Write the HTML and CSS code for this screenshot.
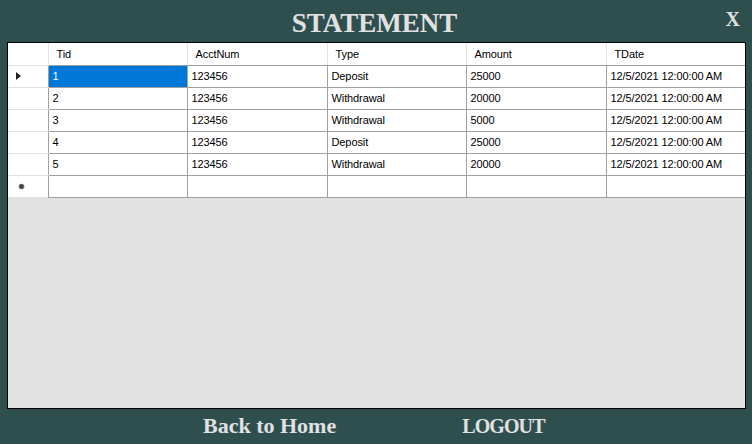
FILE: index.html
```html
<!DOCTYPE html>
<html>
<head>
<meta charset="utf-8">
<link rel="stylesheet" href="styles.css">
</head>
<body>
<div class="window">
  <header class="top">
    <div class="spacer"></div>
    <h1 class="title">STATEMENT</h1>
    <div class="close-wrap"><span class="close">X</span></div>
  </header>
  <div class="grid">
    <table class="dgv">
      <colgroup>
        <col class="c-rh"><col class="c1"><col class="c2"><col class="c3"><col class="c4"><col class="c5">
      </colgroup>
      <thead>
        <tr class="hdr">
          <th class="rh"></th><th>Tid</th><th>AcctNum</th><th>Type</th><th>Amount</th><th>TDate</th>
        </tr>
      </thead>
      <tbody>
        <tr>
          <td class="rh"><svg class="arrow" width="5" height="8" viewBox="0 0 5 8"><path d="M0 0 L5 4 L0 8 Z" fill="#222"/></svg></td>
          <td class="sel">1</td><td>123456</td><td>Deposit</td><td>25000</td><td>12/5/2021 12:00:00 AM</td>
        </tr>
        <tr><td class="rh"></td><td>2</td><td>123456</td><td>Withdrawal</td><td>20000</td><td>12/5/2021 12:00:00 AM</td></tr>
        <tr><td class="rh"></td><td>3</td><td>123456</td><td>Withdrawal</td><td>5000</td><td>12/5/2021 12:00:00 AM</td></tr>
        <tr><td class="rh"></td><td>4</td><td>123456</td><td>Deposit</td><td>25000</td><td>12/5/2021 12:00:00 AM</td></tr>
        <tr><td class="rh"></td><td>5</td><td>123456</td><td>Withdrawal</td><td>20000</td><td>12/5/2021 12:00:00 AM</td></tr>
        <tr class="new">
          <td class="rh"><svg class="star" width="7" height="7" viewBox="0 0 7 7"><circle cx="3.5" cy="3.5" r="2.8" fill="#666"/><circle cx="3.5" cy="3.5" r="1.4" fill="#3a3a3a"/></svg></td>
          <td></td><td></td><td></td><td></td><td></td>
        </tr>
      </tbody>
    </table>
  </div>
  <footer class="bottom">
    <span class="link back">Back to Home</span>
    <span class="link logout">LOGOUT</span>
  </footer>
</div>
</body>
</html>
```
FILE: styles.css
```css
* { box-sizing: border-box; }
html, body { margin: 0; padding: 0; }
body {
  width: 752px;
  height: 444px;
  background: #2f4f4f;
  overflow: hidden;
}
.window {
  display: flex;
  flex-direction: column;
  height: 444px;
  padding: 0 6px 0 7px;
}
.top {
  height: 42px;
  display: grid;
  grid-template-columns: 1fr auto 1fr;
  align-items: start;
}
.title {
  margin: 0;
  padding-top: 8px;
  padding-right: 4px;
  font-family: "Liberation Serif", "Times New Roman", serif;
  font-weight: bold;
  font-size: 27px;
  line-height: 30px;
  color: #e1e1e1;
}
.close-wrap {
  display: flex;
  justify-content: flex-end;
}
.close {
  font-family: "Liberation Serif", "Times New Roman", serif;
  font-weight: bold;
  font-size: 20px;
  line-height: 20px;
  color: #e1e1e1;
  padding-top: 9px;
  margin-right: 6px;
}
.grid {
  height: 367px;
  border: 1px solid #000;
  background: #e2e2e2;
}
.dgv {
  border-collapse: collapse;
  table-layout: fixed;
  width: 737px;
  font-family: "Liberation Sans", Arial, sans-serif;
  font-size: 11px;
  letter-spacing: -0.1px;
  color: #000;
}
.c-rh { width: 40px; }
.c1 { width: 139px; }
.c2 { width: 140px; }
.c3 { width: 139px; }
.c4 { width: 140px; }
.c5 { width: 139px; }
.dgv th, .dgv td {
  height: 22px;
  padding: 0 0 0 4px;
  text-align: left;
  font-weight: normal;
  white-space: nowrap;
  color: #000;
  background: #fff;
  border-right: 1px solid #a0a0a0;
  border-bottom: 1px solid #a0a0a0;
  vertical-align: middle;
}
.dgv th {
  padding-left: 8px;
  border-right: 1px solid #e3e3e3;
}
.dgv th:last-child, .dgv td:last-child { border-right: none; }
.dgv th.rh { border-right: 1px solid #e3e3e3; border-bottom: 1px solid #e3e3e3; }
.dgv td.rh {
  border-right: 1px solid #a0a0a0;
  border-bottom: 1px solid #e3e3e3;
  padding-left: 8px;
}
.dgv tr.new td.rh { border-bottom: none; }
.dgv td.sel {
  background: #0078d7;
  color: #fff;
}
.arrow { display: block; }
.star { display: block; margin-left: 2px; }
.bottom {
  flex: 1;
  display: flex;
  align-items: center;
  padding-left: 196px;
  padding-bottom: 1px;
}
.link {
  font-family: "Liberation Serif", "Times New Roman", serif;
  font-weight: bold;
  font-size: 22px;
  color: #e1e1e1;
}
.logout {
  margin-left: 126px;
  font-size: 20px;
  letter-spacing: -0.9px;
}
```
